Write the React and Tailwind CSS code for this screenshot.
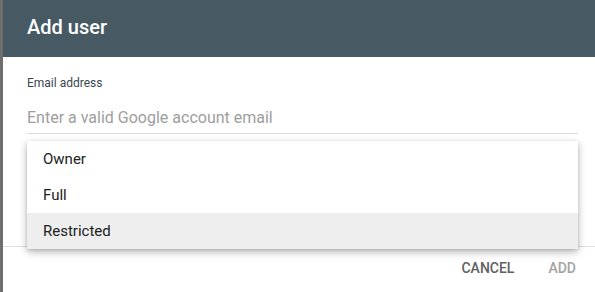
export default function App() {
  const roles = ["Owner", "Full", "Restricted"];

  return (
    <div
      className="flex w-[595px] h-[292px] overflow-hidden bg-white"
      style={{ fontFamily: "Roboto, 'Liberation Sans', sans-serif" }}
    >
      {/* backdrop edge */}
      <div className="w-[3px] shrink-0 bg-[#6e6e6e]" />

      {/* Dialog */}
      <div className="relative flex-1 flex flex-col">
        <header className="h-[57px] shrink-0 bg-[#475a63] px-6 flex items-center">
          <h1 className="text-white text-[20px] font-medium leading-none pb-[3px]">Add user</h1>
        </header>

        <div className="h-[189px] shrink-0 px-6 pt-[18px]">
          <label className="block text-[12px] leading-4 text-[#37474f]">Email address</label>
          <div className="mt-[17px] w-[551px] border-b border-[#dcdcdc] pb-[5px]">
            <div className="text-[16px] leading-5 text-[#9e9e9e]">
              Enter a valid Google account email
            </div>
          </div>
        </div>

        {/* Role dropdown menu */}
        <div className="absolute left-6 top-[141px] w-[551px] bg-white shadow-[0_3px_8px_rgba(0,0,0,0.28),0_1px_3px_rgba(0,0,0,0.12)] z-10">
          {roles.map((role) => (
            <div
              key={role}
              className={`h-9 flex items-center px-4 text-[15px] text-[#212121] ${
                role === "Restricted" ? "bg-[#eeeeee]" : ""
              }`}
            >
              {role}
            </div>
          ))}
        </div>

        <footer className="flex-1 border-t border-[#e0e0e0] flex items-center justify-end gap-[34px] pr-[26px] pb-[2px]">
          <button className="text-[14px] font-medium text-[#616161] uppercase">Cancel</button>
          <button className="text-[14px] font-medium text-[#a3a3a3] uppercase">Add</button>
        </footer>
      </div>
    </div>
  );
}
